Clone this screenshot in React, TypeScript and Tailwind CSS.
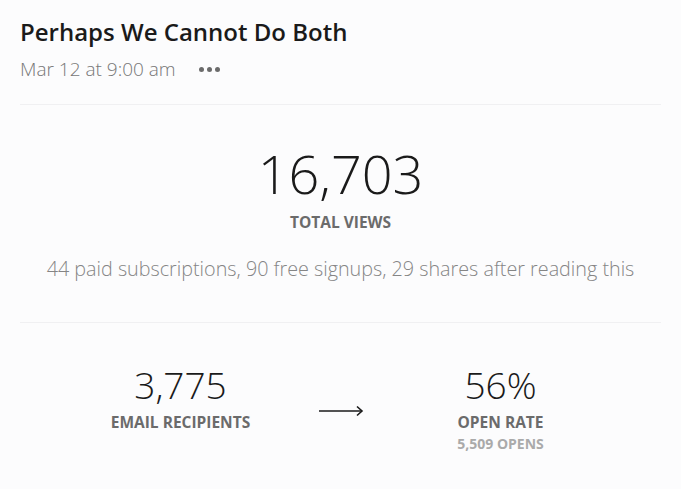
import React from 'react'

function Stat({ value, label, sub }: { value: string; label: string; sub?: string }) {
  return (
    <div className="flex w-[220px] flex-col items-center">
      <div className="text-[37px] font-light leading-[44px] text-[#1a1a1a]">{value}</div>
      <div className="mt-[5px] text-[15.5px] font-bold leading-[20px] text-[#6b6b6b]">{label}</div>
      {sub && <div className="mt-[3px] text-[14px] font-bold leading-[18px] text-[#aaaaaa]">{sub}</div>}
    </div>
  )
}

export default function App() {
  return (
    <div className="min-h-[489px] bg-[#fcfcfd] px-5 font-['Open_Sans',sans-serif]">
      {/* Header */}
      <div className="pt-[16px] pb-[23px]">
        <h1 className="text-[24px] font-semibold leading-[32px] text-[#1a1a1a]">Perhaps We Cannot Do Both</h1>
        <div className="mt-[9px] flex items-center">
          <span className="text-[19px] font-light leading-[24px] text-[#777]">Mar 12 at 9:00 am</span>
          <span className="ml-[23px] flex gap-[3px]">
            <span className="h-[5px] w-[5px] rounded-full bg-[#6b6b6b]" />
            <span className="h-[5px] w-[5px] rounded-full bg-[#6b6b6b]" />
            <span className="h-[5px] w-[5px] rounded-full bg-[#6b6b6b]" />
          </span>
        </div>
      </div>
      <div className="h-px bg-[#f0f0f2]" />

      {/* Total views */}
      <div className="flex flex-col items-center pt-[36px] pb-[40px]">
        <div className="text-[54px] font-light leading-[64px] text-[#1a1a1a]">16,703</div>
        <div className="mt-[7px] text-[15.5px] font-bold leading-[20px] text-[#6b6b6b]">TOTAL VIEWS</div>
        <div className="mt-[24px] text-[19.75px] font-light leading-[26px] text-[#858585]">
          44 paid subscriptions, 90 free signups, 29 shares after reading this
        </div>
      </div>
      <div className="h-px bg-[#f0f0f2]" />

      {/* Email stats */}
      <div className="flex items-start justify-center pt-[40px]">
        <Stat value="3,775" label="EMAIL RECIPIENTS" />
        <div className="flex w-[100px] justify-center pt-[42px]">
          <svg width="46" height="12" viewBox="0 0 46 12" fill="none" stroke="#1a1a1a" strokeWidth="1.6">
            <path d="M1 6h43" />
            <path d="M39 1.5l5 4.5-5 4.5" />
          </svg>
        </div>
        <Stat value="56%" label="OPEN RATE" sub="5,509 OPENS" />
      </div>
    </div>
  )
}
